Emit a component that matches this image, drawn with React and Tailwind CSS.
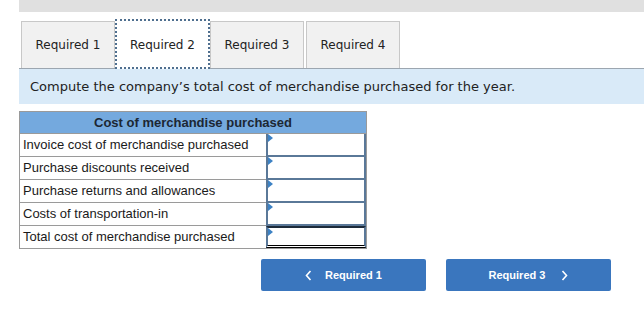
import React from 'react';

const tabs = ['Required 1', 'Required 2', 'Required 3', 'Required 4'];
const rows = [
  'Invoice cost of merchandise purchased',
  'Purchase discounts received',
  'Purchase returns and allowances',
  'Costs of transportation-in',
];

function Marker() {
  return (
    <span className="absolute left-0 top-0 w-0 h-0 border-y-[4px] border-y-transparent border-l-[5px] border-l-[#3d82c4]" />
  );
}

export default function App() {
  return (
    <div className="w-[644px] h-[315px] bg-white pl-[19px] font-['DejaVu_Sans',sans-serif] text-[#222]">
      <div className="h-[12px] bg-[#e0e0e0]" />

      <div className="flex items-end pl-[2px] mt-[6px] h-[50px]">
        {tabs.map((t, i) =>
          i === 1 ? (
            <div
              key={t}
              className="w-[95px] h-[50px] bg-white border-2 border-dotted border-[#4f6f8f] flex items-center justify-center pt-[2px] text-[12px] -mb-[1px] relative z-10"
            >
              {t}
            </div>
          ) : (
            <div
              key={t}
              className={`w-[94px] h-[47px] bg-[#f1f1f1] border border-[#c8c8c8] border-b-0 flex items-center justify-center text-[12px] ${i === 3 ? 'ml-[2px]' : ''}`}
            >
              {t}
            </div>
          )
        )}
      </div>

      <div className="h-[36px] bg-[#d9eaf8] border-t border-[#9ca6b0] flex items-center pl-[11px] text-[13px]">
        Compute the company’s total cost of merchandise purchased for the year.
      </div>

      <div className="mt-[7px] w-[348px] border border-[#9a9a9a] font-['Liberation_Sans',Arial,sans-serif] text-[13px] text-[#1a1a1a]">
        <div className="h-[22px] bg-[#74a9de] border-b border-[#9a9a9a] flex items-center justify-center font-bold text-[#1c2733]">
          Cost of merchandise purchased
        </div>
        {rows.map((r) => (
          <div key={r} className="flex h-[23px]">
            <div className="w-[246px] border-b border-[#9a9a9a] flex items-center pl-[3px]">{r}</div>
            <div className="relative flex-1 border-2 border-t-0 border-[#5a7898] border-b-[2px]">
              <Marker />
            </div>
          </div>
        ))}
        <div className="flex h-[22px]">
          <div className="w-[246px] flex items-center pl-[3px]">Total cost of merchandise purchased</div>
          <div className="relative flex-1 border-x-2 border-[#5a7898] border-t-2 border-t-[#1d2b3a] border-b-[3px] border-b-black border-double">
            <Marker />
          </div>
        </div>
      </div>

      <div className="flex gap-[20px] ml-[242px] mt-[10px] font-['Liberation_Sans',Arial,sans-serif] text-[11px] font-bold text-white">
        <button className="w-[165px] h-[32px] bg-[#3a76be] rounded-[2px] flex items-center justify-center gap-[13px]">
          <svg width="7" height="11" viewBox="0 0 7 11" fill="none" stroke="white" strokeWidth="1.6">
            <path d="M5.5 1 L1.5 5.5 L5.5 10" />
          </svg>
          <span>Required 1</span>
        </button>
        <button className="w-[165px] h-[32px] bg-[#3a76be] rounded-[2px] flex items-center justify-center gap-[16px]">
          <span>Required 3</span>
          <svg width="7" height="11" viewBox="0 0 7 11" fill="none" stroke="white" strokeWidth="1.6">
            <path d="M1.5 1 L5.5 5.5 L1.5 10" />
          </svg>
        </button>
      </div>
    </div>
  );
}
